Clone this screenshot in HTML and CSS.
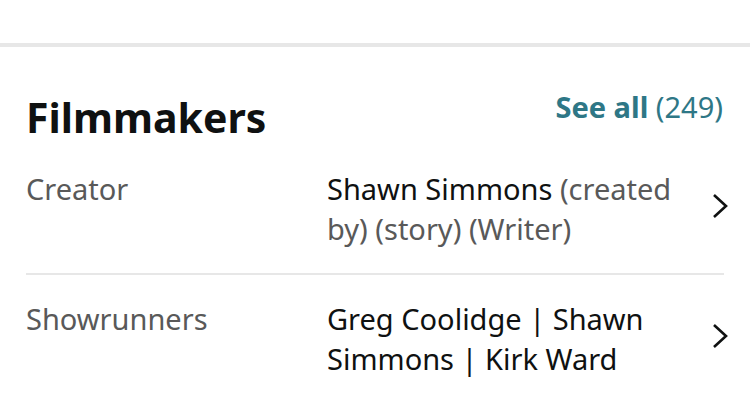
FILE: index.html
```html
<!DOCTYPE html>
<html lang="en">
<head>
<meta charset="utf-8">
<title>Filmmakers</title>
<link rel="stylesheet" href="styles.css">
</head>
<body>
<div class="topbar"></div>
<section class="filmmakers">
  <header class="head">
    <h2 class="title">Filmmakers</h2>
    <a class="see-all" href="#"><b>See all</b> (249)</a>
  </header>
  <ul class="rows">
    <li class="row">
      <span class="label">Creator</span>
      <p class="value"><span class="name">Shawn Simmons</span> <span class="muted">(created by) (story) (Writer)</span></p>
      <svg class="chev" width="16" height="26" viewBox="0 0 16 26"><polyline points="2,2 14,13 2,24" fill="none" stroke="#0f1111" stroke-width="2.6"/></svg>
    </li>
    <li class="row">
      <span class="label">Showrunners</span>
      <p class="value"><span class="name">Greg Coolidge | Shawn Simmons | Kirk Ward</span></p>
      <svg class="chev" width="16" height="26" viewBox="0 0 16 26"><polyline points="2,2 14,13 2,24" fill="none" stroke="#0f1111" stroke-width="2.6"/></svg>
    </li>
  </ul>
</section>
</body>
</html>
```

FILE: styles.css
```css
html, body {
  margin: 0;
  padding: 0;
  background: #fff;
}
body {
  font-family: "Noto Sans", "Open Sans", sans-serif;
  color: #0f1111;
}
.topbar {
  height: 43px;
  border-bottom: 4px solid #e7e7e7;
}
.filmmakers {
  padding: 46px 26px 0 26px;
}
.head {
  display: flex;
  justify-content: space-between;
  align-items: flex-start;
}
.title {
  margin: 0;
  font-size: 41px;
  line-height: 48px;
  font-weight: 700;
  color: #0f1111;
}
.see-all {
  font-size: 29px;
  line-height: 28px;
  color: #2e7786;
  text-decoration: none;
  margin-right: 1px;
}
.see-all b {
  font-weight: 700;
}
.rows {
  list-style: none;
  margin: 4px 0 0 0;
  padding: 0;
}
.row {
  display: grid;
  grid-template-columns: 293px 1fr 16px;
  column-gap: 8px;
  padding: 24px 0;
  font-size: 29px;
  line-height: 40px;
}
.row + .row {
  border-top: 2px solid #e7e7e7;
}
.label {
  color: #595959;
}
.value {
  margin: 0;
  color: #0f1111;
  padding-right: 20px;
}
.name {
  color: #0f1111;
}
.muted {
  color: #595959;
}
.chev {
  margin-top: 24px;
  margin-right: -4px;
  justify-self: end;
}
```
